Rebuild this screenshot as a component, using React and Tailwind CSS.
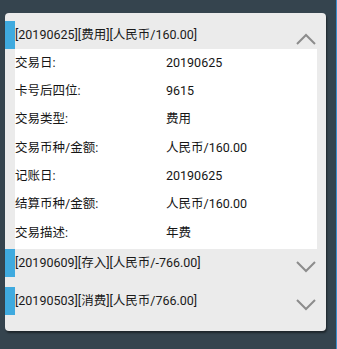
import React from "react"

const rows = [
  ["交易日:", "20190625"],
  ["卡号后四位:", "9615"],
  ["交易类型:", "费用"],
  ["交易币种/金额:", "人民币/160.00"],
  ["记账日:", "20190625"],
  ["结算币种/金额:", "人民币/160.00"],
  ["交易描述:", "年费"],
]

const records = [
  { title: "[20190625][费用][人民币/160.00]", open: true },
  { title: "[20190609][存入][人民币/-766.00]", open: false },
  { title: "[20190503][消费][人民币/766.00]", open: false },
]

function Chevron({ up }) {
  return (
    <svg width="20" height="12" viewBox="0 0 20 12" className="shrink-0 mt-[12px]">
      <polyline
        points={up ? "1,11 10,2 19,11" : "1,1 10,10 19,1"}
        fill="none"
        stroke="#8c8c8c"
        strokeWidth="2"
      />
    </svg>
  )
}

function Record({ record }) {
  return (
    <div className={record.open ? "" : "pb-[10px]"}>
      <div className="flex h-[28px] pr-[10px]">
        <div className="w-[10px] bg-[#3faadf] shrink-0" />
        <div className="flex-1 flex items-center text-[12.5px] text-[#1a1a1a] leading-none">{record.title}</div>
        <Chevron up={record.open} />
      </div>
      {record.open && (
        <div className="ml-[10px] mr-[9px] bg-white pb-[2px]">
          {rows.map(([label, value]) => (
            <div key={label} className="flex items-center h-[28.3px] text-[12.5px] text-[#161616]">
              <div className="w-[151px] shrink-0">{label}</div>
              <div>{value}</div>
            </div>
          ))}
        </div>
      )}
    </div>
  )
}

export default function App() {
  return (
    <div
      className="w-[337px] h-[349px] bg-[#35444e] pt-[13px] pl-[5px] border-r border-[#3b8fcb] overflow-hidden"
      style={{ fontFamily: "Roboto, 'Noto Sans CJK SC', sans-serif" }}
    >
      <div className="w-[321px] h-[318px] rounded-[4px] bg-[#ebebeb] pt-[8px] shadow-[1px_2px_2px_rgba(0,0,0,0.45)]">
        {records.map((r) => (
          <Record key={r.title} record={r} />
        ))}
      </div>
    </div>
  )
}
